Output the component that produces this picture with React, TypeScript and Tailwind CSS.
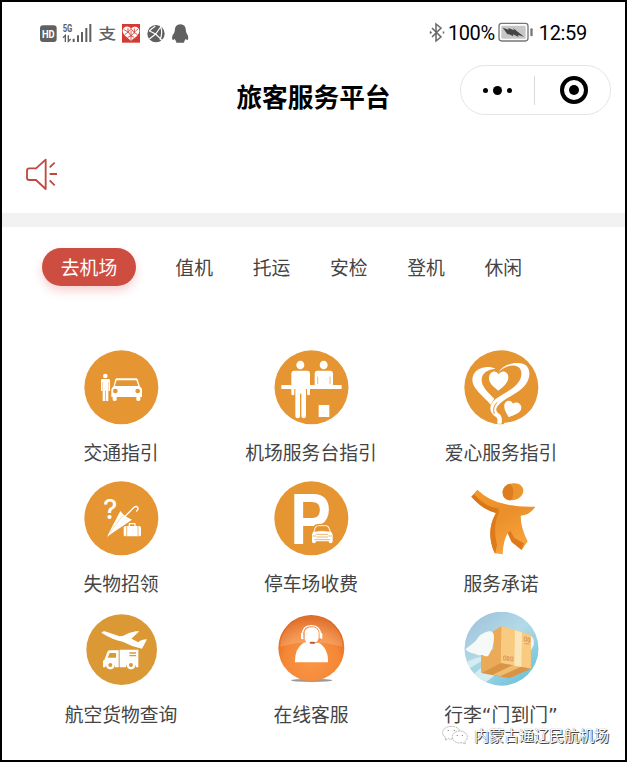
import type { ReactNode } from 'react'

const tabs = ['值机', '托运', '安检', '登机', '休闲']

function Disc({ viewBox, cx, cy, r = 111, fill = '#e59532', children }: {
  viewBox: string
  cx: number
  cy: number
  r?: number
  fill?: string
  children: ReactNode
}) {
  return (
    <svg viewBox={viewBox} className="block w-[75px] h-[75px] overflow-visible">
      <circle cx={cx} cy={cy} r={r} fill={fill} />
      {children}
    </svg>
  )
}

function TrafficIcon() {
  return (
    <Disc viewBox="42 30 225 225" cx={154} cy={142}>
      <g fill="#fff">
        <circle cx="106" cy="108" r="7" />
        <path d="M97 117h19q4 0 4 4v32h-4v-27h-1v57h-7v-31h-2v31h-8v-57h-1v27h-4v-32q0-4 4-4z" />
        <path fillRule="evenodd" d="M136 118q1-3 5-3h57q4 0 5 3l7 22q6 3 6 9v22h-5v8q0 4-6 4t-6-4v-8h-59v8q0 4-6 4t-6-4v-8h-4v-22q0-6 6-9zm4 3-6 17h71l-6-17z" />
      </g>
      <circle cx="136" cy="153" r="7" fill="#e59532" />
      <circle cx="203" cy="153" r="7" fill="#e59532" />
    </Disc>
  )
}

function DeskIcon() {
  return (
    <Disc viewBox="101 30 225 225" cx={213.5} cy={142}>
      <g fill="#fff">
        <ellipse cx="180" cy="75" rx="12" ry="13" />
        <ellipse cx="250" cy="75" rx="12" ry="13" />
        <path d="M162 92h38q9 0 9 9v61q0 4-4 4t-5-4v-15h-3v82q0 6-7 6t-7-6v-68h-4v68q0 6-7 6t-7-6v-82h-3v15q0 4-4 4t-5-4v-61q0-9 9-9z" />
        <path d="M231 92h38q9 0 9 9v34h-55v-34q0-9 8-9z" />
        <path d="M123 135h181v12H123zM235 195h32v36h-32z" />
      </g>
      <path d="M232 110v22M269 110v22" stroke="#e59532" strokeWidth="2" />
    </Disc>
  )
}

function LoveIcon() {
  return (
    <Disc viewBox="71 30 225 225" cx={183} cy={142}>
      <g fill="#fff">
        <path d="M165 86C148 76 100 78 96 117c-2 28 32 50 55 77l11-18c-20-20-39-36-38-58 1-20 20-30 41-32z" />
        <path d="M173 98c14-22 42-32 68-28 27 4 32 32 20 55-18 34-66 46-88 72-11 13-2 21 5 26 8 8 7 16 6 28h-13c0-9 2-16-4-20-22-14-23-37-1-54 24-18 60-30 74-60 7-17 3-35-13-39-20-5-40 6-54 20z" />
        <path d="M174 152c-17-14-28-22-28-38 0-20 21-27 29-11 10-15 30-8 29 10-1 16-15 26-30 39z" />
        <path d="M205 232c-8-15-15-25-13-38 3-16 22-15 26-3 10-8 26 0 25 13-1 15-20 20-38 28z" />
        <path d="M190 249q50-4 78-36l6 4q-20 38-76 44z" />
      </g>
      <path d="M162 222q-7-20 8-35M176 197q9 11 6 28" fill="none" stroke="#e59532" strokeWidth="3" />
    </Disc>
  )
}

function LostIcon() {
  return (
    <Disc viewBox="42 18 225 225" cx={154} cy={130}>
      <text x="99" y="132" fontSize="82" fontWeight="500" fill="#fff" fontFamily="Inter, sans-serif">?</text>
      <path d="M111 186l7-15 33-63q13 18 35 26l-63 43z" fill="#fff" />
      <path d="m166 123 26-26q7-5 11 0 3 5-3 11" fill="none" stroke="#fff" strokeWidth="4" strokeLinecap="round" />
      <path d="m119 173 40-52" stroke="#e59532" strokeWidth="1" />
      <g fill="#fff">
        <rect x="161" y="153" width="52" height="31" rx="5" />
        <path d="M176 153v-7q0-2 3-2h15q3 0 3 2v7h-4v-5h-13v5z" />
      </g>
      <path d="M170 153v31M204 153v31" stroke="#e59532" strokeWidth="2" />
    </Disc>
  )
}

function ParkingIcon() {
  return (
    <Disc viewBox="41 18 225 225" cx={153} cy={130}>
      <text x="90" y="206" fontSize="214" fontWeight="700" fill="#fff" fontFamily="'Liberation Sans', Arial, sans-serif" textLength="122" lengthAdjust="spacingAndGlyphs">P</text>
      <path d="M160 154q3-6 11-7 15-2 30 0 8 1 10 7l6 17q4 3 4 8v23q0 8-7 8t-8-6h-41q-1 6-8 6t-7-8v-23q0-5 4-8z" fill="#e59532" />
      <path d="M163 158q3-6 11-7 12-2 24 0 7 1 9 7l5 13q5 3 5 8v20q0 6-6 6t-6-6h-38q0 6-6 6t-6-6v-20q0-5 4-8z" fill="#fff" />
      <path d="M167 158q2-3 7-4 12-1 22 0 5 1 7 4l4 11q-21-4-44 0zM157 183h10M204 183h10M168 178h35M168 186h35M162 194h47" fill="#e59532" stroke="#e59532" strokeWidth="2" />
    </Disc>
  )
}

function PromiseIcon() {
  return (
    <svg viewBox="41 18 225 225" className="block w-[75px] h-[75px]">
      <defs>
        <linearGradient id="promise" x1="0" y1="0" x2=".5" y2="1">
          <stop offset="0" stopColor="#f49a29" />
          <stop offset=".5" stopColor="#ea8f2b" />
          <stop offset="1" stopColor="#f8a33d" />
        </linearGradient>
      </defs>
      <path d="M157 48q3-17 23-22 24-4 35 9 8 12 0 25-9 13-27 16-19 1-28-11-4-7-3-17z" fill="#ec972d" />
      <path d="M157 48q3-17 23-22 10 12 9 31-1 12-8 19-15 0-21-11-4-7-3-17z" fill="#dd7d20" />
      <path d="M63 65 81 44q35 34 86 44 40 9 88 7-17 26-44 27 0 36 21 77l-18 26-30-24-12-27q-14 25-15 64l-23-3q-21-44-11-88 4-16 14-33-38-9-74-49z" fill="url(#promise)" />
      <path d="m63 65 8-7q37 41 75 43l-9 13q-38-9-74-49z" fill="#d97618" />
      <path d="M137 114q9-10 11-8-23 46-8 104l-6 27q-21-44-11-88 4-16 14-35zM172 174q6-5 8-7l12 22 29 16-7 20-30-24z" fill="#dc7a1c" />
    </svg>
  )
}

function CargoIcon() {
  return (
    <Disc viewBox="72 22 225 225" cx={185} cy={135} r={106} fill="#db9935">
      <g fill="#fff">
        <path d="M124 84q8-7 17-2l38 13 9-1q18-10 39-14h11l-24 22 21 11q6-8 26-9l-15 28q-30-6-58-21-29-5-64-27z" />
        <path d="M149 137h27v51h-11q-2-15-14-15t-15 15h-7v-19q0-2 4-3l9-24q2-5 7-5zM179 135h56v53h-7q-2-15-15-15t-15 15h-19z" />
        <path fillRule="evenodd" d="M151 168a13 13 0 1 0 .1 0zm0 7a6 6 0 1 1-.1 0zM213 168a13 13 0 1 0 .1 0zm0 7a6 6 0 1 1-.1 0z" />
      </g>
      <path d="M149 145h19v14h-25z" fill="#db9935" />
      <path d="M208 145h20M208 153h20" stroke="#db9935" strokeWidth="4" />
    </Disc>
  )
}

function ServiceIcon() {
  return (
    <svg viewBox="41 22 225 225" className="block w-[75px] h-[75px]">
      <defs>
        <radialGradient id="orb" cx=".5" cy=".7" r=".65">
          <stop offset="0" stopColor="#fb9647" />
          <stop offset=".65" stopColor="#f48736" />
          <stop offset="1" stopColor="#dd6319" />
        </radialGradient>
        <linearGradient id="gloss" x1="0" y1="0" x2="0" y2="1">
          <stop offset="0" stopColor="#fff" stopOpacity=".08" />
          <stop offset="1" stopColor="#fff" stopOpacity=".18" />
        </linearGradient>
      </defs>
      <ellipse cx="154" cy="227" rx="62" ry="5" fill="#777" opacity=".75" />
      <circle cx="153" cy="130" r="99" fill="url(#orb)" />
      <path d="M60 126a93 93 0 0 1 186 0q-96-25-186 0z" fill="url(#gloss)" />
      <path d="M104 173q-1-41 24-57 7-4 12-5 13 11 27 0 16 4 26 20 11 17 10 42z" fill="#fff" />
      <path d="M132 84q4-16 22-16t21 16v15q-4 20-21 20t-22-20z" fill="#fff" />
      <path d="M126 92q0-29 27-29t28 29" fill="none" stroke="#fff" strokeWidth="4" />
      <rect x="122" y="84" width="8" height="20" rx="4" fill="#fff" />
      <rect x="178" y="84" width="8" height="20" rx="4" fill="#fff" />
      <path d="M181 101q-5 14-23 14M131 83v17" fill="none" stroke="#e8742a" strokeWidth="2.5" />
      <rect x="148" y="111" width="16" height="6" rx="3" fill="#b85f31" />
    </svg>
  )
}

function LuggageIcon() {
  return (
    <svg viewBox="101 22 225 225" className="block w-[75px] h-[75px]">
      <defs>
        <clipPath id="round"><circle cx="213.5" cy="132" r="111" /></clipPath>
        <linearGradient id="sky" x1="0" y1="0" x2=".8" y2="1">
          <stop offset="0" stopColor="#9bbfd8" />
          <stop offset=".5" stopColor="#b4dae8" />
          <stop offset="1" stopColor="#69c1d9" />
        </linearGradient>
      </defs>
      <g clipPath="url(#round)">
        <path d="M101 20h226v226H101z" fill="url(#sky)" />
        <path d="M104 175q35-20 65-21l22 60-35 26z" fill="#d5edf2" />
        <path d="m110 195 50-30 6 12-45 40z" fill="#a6d8e4" />
        <path d="M298 91q16 8 12 31l-11 20z" fill="#edf5f5" />
        <path d="m213 65 88 25 1 100-65 31-85-18v-53l38-16-3-53z" fill="#f3b65e" />
        <path d="m213 65 88 25 1 102-91-17z" fill="#f9cb80" />
        <path d="m187 81 26-16-2 110-58 29-1-54 38-16z" fill="#ebaa57" />
        <path d="m153 205 58-30 91 17-65 29z" fill="#d99447" />
        <path d="m187 210 61-29 23 5-61 29z" fill="#efbd70" />
        <path d="m254 77 21 6-2 104-21-4z" fill="#fae6b9" />
        <path d="M106 133q17-13 30-24 14-24 39-29 16-2 16 17 0 31-17 56-9 4-17-2l-14 1q-7-6-20-7-14-5-17-11z" fill="#f5faf9" />
        <path d="M282 97h7v12h-7zM293 100h6v12h-6zM283 116l14 3M220 154h7v12h-7zM231 156h5v11h-5zM241 157h7v11h-7z" fill="none" stroke="#c06e40" strokeWidth="2" opacity=".75" />
      </g>
    </svg>
  )
}

const services = [
  { name: '交通指引', icon: <TrafficIcon /> },
  { name: '机场服务台指引', icon: <DeskIcon /> },
  { name: '爱心服务指引', icon: <LoveIcon /> },
  { name: '失物招领', icon: <LostIcon /> },
  { name: '停车场收费', icon: <ParkingIcon /> },
  { name: '服务承诺', icon: <PromiseIcon /> },
  { name: '航空货物查询', icon: <CargoIcon /> },
  { name: '在线客服', icon: <ServiceIcon /> },
  { name: '行李“门到门”', icon: <LuggageIcon /> },
]

function StatusBar() {
  return (
    <div className="flex h-[60px] items-center justify-between pl-[36px] pr-[38px] pt-[2px]">
      {/* Network and app notifications */}
      <svg viewBox="114 66 456 63" className="block w-[152px] h-[21px] overflow-visible">
        <rect x="120" y="73" width="50" height="50" rx="9" fill="#606060" />
        <text x="126" y="110" fontSize="33" fontWeight="700" fill="#fff" fontFamily="Roboto, sans-serif" textLength="38" lengthAdjust="spacingAndGlyphs">HD</text>
        <text x="188" y="93" fontSize="32" fontWeight="700" fill="#606060" fontFamily="Roboto, sans-serif" textLength="29" lengthAdjust="spacingAndGlyphs">5G</text>
        <path d="M189 110l7-7v20M205 103v18l7-7" fill="none" stroke="#606060" strokeWidth="4" />
        <path d="M221 113v10M234 103v20M246 93v30M259 81v42M271 69v54" stroke="#606060" strokeWidth="6" />
        <text x="295" y="113" fontSize="44" fontWeight="500" fill="#606060" fontFamily="'Noto Sans CJK SC', sans-serif" textLength="54" lengthAdjust="spacingAndGlyphs">支</text>
        <rect x="366" y="69" width="54" height="56" fill="#d23a32" />
        <path d="M393 119c-12-10-25-18-25-29 0-15 18-18 25-7 9-11 26-6 25 8-1 12-14 20-25 28z" fill="#fff" />
        <path d="m371 85 13 8 9-10 9 11 12-10M374 101l11-8 8 12 10-11 10 8M383 109l10-4 9 4M384 81v15M403 82v16M393 88v29" fill="none" stroke="#d23a32" strokeWidth="2.5" />
        <circle cx="468" cy="98" r="26" fill="#606060" />
        <path d="m447 89 20 10 17-24M467 99l-19 15M467 99l20 20M482 75q7 23-2 41M448 90q8-8 18-14" fill="none" stroke="#fff" strokeWidth="3.5" />
        <path d="M541 70q17 0 17 21 0 5 5 11 4 10 0 15-4 0-6-4-1 5-5 8 4 3-1 4h-21q-5-1-1-4-4-3-5-8-2 4-6 4-4-5 0-15 6-6 6-11 0-21 17-21z" fill="#606060" />
      </svg>
      {/* Battery and clock */}
      <div className="flex items-center text-[20px] leading-none font-[Roboto,sans-serif] text-black">
        <svg viewBox="0 0 16 22" className="w-4 h-[22px] mt-[-1px]" fill="none" stroke="#666" strokeWidth="1.5">
          <path d="m3 6 9 9-5 4V2l5 4-9 9M1 9.5l1 1-1 1M14.5 9.5v2" />
        </svg>
        <span className="ml-[3px] tracking-[-0.4px]">100%</span>
        <svg viewBox="264 66 108 63" className="ml-[3px] mt-[-1px] w-9 h-[21px]">
          <rect x="267" y="70" width="87" height="53" rx="8" fill="#fff" stroke="#777" strokeWidth="4" />
          <rect x="274" y="77" width="73" height="39" rx="3" fill="#c7c7c7" />
          <path d="m278 83 18 6-1-5 17 7-2-6 32 25-18-5 2 6-17-8 1 6-16-8 1 5z" fill="#444" />
          <rect x="361" y="85" width="7" height="24" rx="3" fill="#777" />
        </svg>
        <span className="ml-[5px] tracking-[-0.3px]">12:59</span>
      </div>
    </div>
  )
}

export default function App() {
  return (
    <div className="w-[628px] h-[763px] overflow-hidden bg-white font-['Noto_Sans_CJK_SC',sans-serif]">
      <div className="relative flex h-[762px] w-[627px] flex-col border-2 border-black">
        <StatusBar />

        {/* Title bar */}
        <header className="grid h-[54px] shrink-0 grid-cols-[1fr_156px_1fr]">
          <h1 className="col-start-2 mt-[15.5px] h-9 text-center text-[25.7px] leading-9 font-bold whitespace-nowrap text-black">旅客服务平台</h1>
          <div className="mt-[3px] mr-[14px] ml-auto flex h-[50px] w-[151px] items-center rounded-full border border-[#e5e5e5]">
            <div className="flex flex-1 items-center justify-center gap-[5px]">
              <span className="size-[5px] rounded-full bg-black" />
              <span className="size-[9px] rounded-full bg-black" />
              <span className="size-[5px] rounded-full bg-black" />
            </div>
            <div className="h-[29px] w-px bg-[#d9d9d9]" />
            <div className="flex flex-1 justify-center pl-[3px]">
              <div className="flex size-7 items-center justify-center rounded-full border-4 border-black">
                <span className="size-[10px] rounded-full bg-black" />
              </div>
            </div>
          </div>
        </header>

        {/* Notice */}
        <div className="h-[97px] shrink-0 pt-[41px] pl-[22px]">
          <svg viewBox="72 51 105 105" className="block size-[35px]" fill="none" stroke="#c0493e" strokeWidth="5.5" strokeLinejoin="round">
            <path d="M137 59v88l-29-27H88q-7 0-7-7V92q0-7 7-7h20z" />
            <path d="m149 82 15-14M149 102h22M149 121l15 15" />
          </svg>
        </div>
        <div className="h-[14px] shrink-0 bg-[#f2f2f2]" />

        {/* Tabs */}
        <nav className="mt-[21px] ml-[40px] flex h-[38px] shrink-0 items-center text-[18.8px] text-[#444]">
          <div className="flex h-[38px] w-[94px] items-center justify-center rounded-full bg-[#cd4d41] text-white shadow-[0_5px_10px_rgba(225,80,80,0.25)]">去机场</div>
          <div className="ml-[19.5px] flex">
            {tabs.map((tab) => (
              <div key={tab} className="w-[77.3px] text-center">{tab}</div>
            ))}
          </div>
        </nav>

        {/* Services */}
        <div className="mt-[64px] ml-[24px] grid w-[570px] shrink-0 grid-cols-3 font-['DejaVu_Sans','Noto_Sans_CJK_SC',sans-serif]">
          {services.map((service) => (
            <div key={service.name} className="flex h-[131.1px] flex-col items-center">
              {service.icon}
              <div className="mt-[15px] text-[18.8px] leading-7 whitespace-nowrap text-[#444]">{service.name}</div>
            </div>
          ))}
        </div>

        {/* Account watermark */}
        <div className="absolute right-[16px] bottom-[15px] flex items-center gap-[6px]">
          <svg viewBox="34 365 78 60" className="h-5 w-[26px]" fill="#fff" stroke="#999" strokeWidth="2" strokeDasharray="6 2">
            <path d="M62 369c-15 0-26 8-26 19 0 7 4 12 10 15l-3 8 10-5q10 3 19-1c13-3 17-10 17-17 0-11-12-19-27-19z" />
            <path d="M87 383c-13 0-22 8-22 18s10 18 22 18l8-1 9 4-2-7c5-3 8-8 8-14 0-10-10-18-23-18z" />
            <path d="M53 381v2M71 381v2M80 395v2M95 395v2" stroke="#777" strokeWidth="4" strokeDasharray="none" />
          </svg>
          <span className="text-[15px] leading-5 whitespace-nowrap text-white [text-shadow:1px_1px_0_#444,0_0_1px_#555]">内蒙古通辽民航机场</span>
        </div>
      </div>
    </div>
  )
}
